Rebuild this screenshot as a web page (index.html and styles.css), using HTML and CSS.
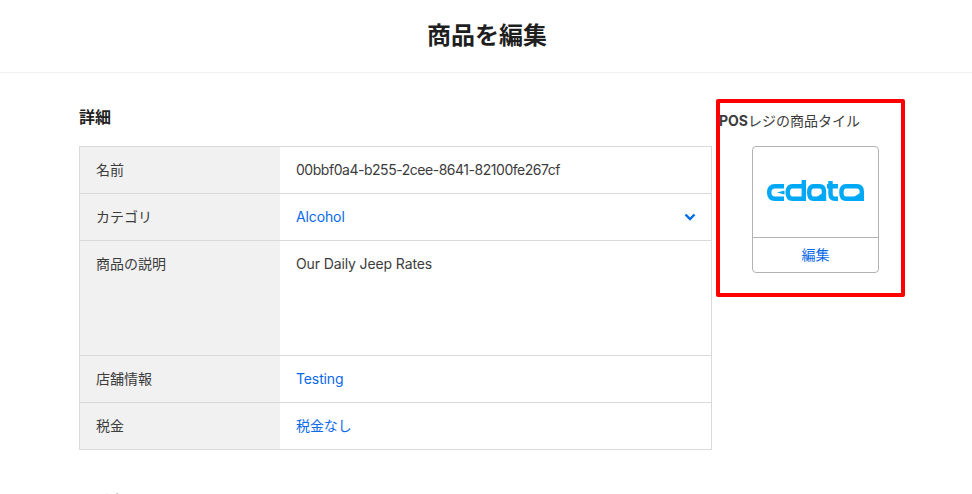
FILE: index.html
```html
<!DOCTYPE html>
<html lang="ja">
<head>
<meta charset="utf-8">
<title>商品を編集</title>
<link rel="stylesheet" href="styles.css">
</head>
<body>
<header class="topbar"><h1 class="title">商品を編集</h1></header>
<main class="layout">
  <div class="details">
    <section>
      <h2 class="heading">詳細</h2>
      <div class="table">
        <div class="row"><div class="label">名前</div><div class="value uuid">00bbf0a4-b255-2cee-8641-82100fe267cf</div></div>
        <div class="row"><div class="label">カテゴリ</div><div class="value link select">Alcohol
          <svg class="chevron" width="12" height="8" viewBox="0 0 12 8"><path d="M1.5 1.5L6 6L10.5 1.5" fill="none" stroke="#006aeb" stroke-width="2.4"/></svg></div></div>
        <div class="row tall"><div class="label">商品の説明</div><div class="value">Our Daily Jeep Rates</div></div>
        <div class="row"><div class="label">店舗情報</div><div class="value link">Testing</div></div>
        <div class="row"><div class="label">税金</div><div class="value link">税金なし</div></div>
      </div>
    </section>
    <h2 class="heading next">コスト</h2>
  </div>
  <aside class="highlight">
    <div class="tile-title"><b>POS</b>レジの商品タイル</div>
    <div class="tile">
      <div class="tile-image">
        <svg class="logo" width="97" height="21" viewBox="0 0 97 21" fill="none" stroke="#00a8f6" stroke-width="4.4">
          <path d="M17 6.2H8Q2.2 6.2 2.2 12.5T8 18.8H17"/>
          <path d="M17.5 10.5L10 12.5L17.5 14.5Z" fill="#00a8f6" stroke="none"/>
          <path d="M36.8 0V18.8H25.5Q20.7 18.8 20.7 12.5T25.5 6.2H35"/>
          <path d="M57 21V11.5Q57 6.2 52.5 6.2H46.5Q42.2 6.2 42.2 12.5T46.5 18.8H57"/>
          <path d="M55.5 17.5H49L55.5 13Z" fill="#00a8f6" stroke="none"/>
          <path d="M60 6.2H71M63.5 1V13.5Q63.5 18.8 68 18.8H71"/>
          <path d="M94.8 21V11.5Q94.8 6.2 90 6.2H79Q74.4 6.2 74.4 12.5T79 18.8H94.8"/>
          <path d="M93 17.5H86L93 13Z" fill="#00a8f6" stroke="none"/>
        </svg>
      </div>
      <div class="tile-action">編集</div>
    </div>
  </aside>
</main>
</body>
</html>
```
FILE: styles.css
```css
* { box-sizing: border-box; }
html, body { margin: 0; height: 494px; overflow: hidden; background: #fff; }
body {
  font-family: Inter, "Noto Sans CJK JP", sans-serif;
  font-size: 14px;
  color: #3c3c3c;
}
.topbar {
  height: 73px;
  border-bottom: 1px solid #f0f0f0;
  display: flex;
  align-items: center;
  justify-content: center;
}
.title {
  margin: 0 0 0 2px;
  font-size: 24px;
  font-weight: 700;
  color: #1f1f1f;
  line-height: 32px;
}
.layout {
  display: flex;
  align-items: flex-start;
  gap: 4px;
  padding: 26px 0 0 79px;
}
.details { width: 633px; }
.heading {
  margin: 0;
  font-size: 16px;
  line-height: 24px;
  font-weight: 700;
  color: #1f1f1f;
  height: 47px;
  padding-top: 6px;
}
.next { margin-top: 32px; }
.table {
  border: 1px solid #d9d9d9;
  border-bottom: 0;
}
.row {
  display: grid;
  grid-template-columns: 200px 1fr;
  height: 47px;
  border-bottom: 1px solid #d9d9d9;
}
.tall { height: 115px; }
.label, .value {
  padding: 0 16px;
  line-height: 46px;
}
.label { background: #f1f1f1; }
.value { letter-spacing: -0.12px; }
.uuid { letter-spacing: -0.47px; }
.link { color: #0a6ae8; }
.select {
  display: flex;
  align-items: center;
  justify-content: space-between;
  padding-right: 15px;
}
.chevron { flex: none; }
.highlight {
  width: 189px;
  height: 198px;
  border: 4px solid #f00;
  border-radius: 2px;
  padding: 8px 0 0 0;
}
.tile-title {
  line-height: 20px;
  margin-left: -1px;
}
.tile-title b { font-weight: 700; }
.tile {
  width: 127px;
  height: 127px;
  margin: 15px 0 0 32px;
  border: 1px solid #b3b3b3;
  border-radius: 4px;
  display: flex;
  flex-direction: column;
}
.tile-image {
  flex: none;
  height: 91px;
  border-bottom: 1px solid #b3b3b3;
  display: flex;
  align-items: center;
  justify-content: center;
}
.logo { margin-top: -4px; }
.tile-action {
  flex: 1;
  text-align: center;
  color: #0a6ae8;
  line-height: 34px;
}
```
